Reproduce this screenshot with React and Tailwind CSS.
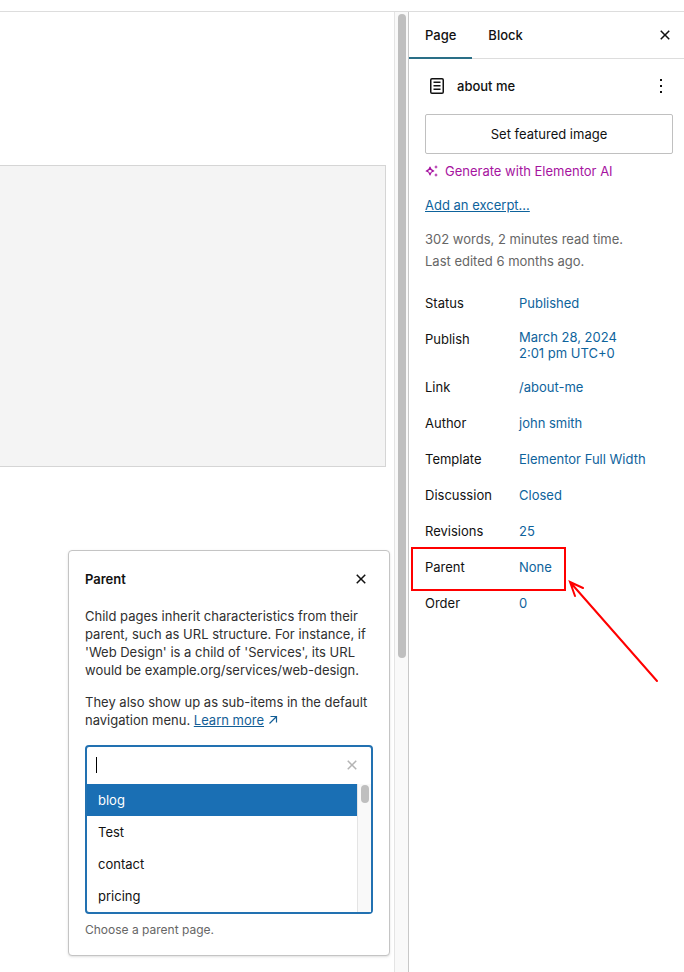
import React, { useState } from 'react';

const pageDetails = [
  { label: 'Status', value: ['Published'] },
  { label: 'Publish', value: ['March 28, 2024', '2:01 pm UTC+0'] },
  { label: 'Link', value: ['/about-me'] },
  { label: 'Author', value: ['john smith'] },
  { label: 'Template', value: ['Elementor Full Width'] },
  { label: 'Discussion', value: ['Closed'] },
  { label: 'Revisions', value: ['25'] },
  { label: 'Parent', value: ['None'], highlighted: true },
  { label: 'Order', value: ['0'] },
];

const parentPages = ['blog', 'Test', 'contact', 'pricing'];

const CloseIcon = () => (
  <svg viewBox="0 0 24 24" className="size-6" fill="currentColor" aria-hidden="true">
    <path d="M12 13.06l3.712 3.713 1.061-1.06L13.061 12l3.712-3.712-1.06-1.06L12 10.938 8.288 7.227l-1.061 1.06L10.939 12l-3.712 3.712 1.06 1.061L12 13.061z" />
  </svg>
);

const PageIcon = () => (
  <svg viewBox="0 0 24 24" className="size-6" fill="currentColor" aria-hidden="true">
    <path d="M15.5 7.5h-7V9h7V7.5Zm-7 3.5h7v1.5h-7V11Zm7 3.5h-7V16h7v-1.5Z" />
    <path
      fillRule="evenodd"
      d="M17 4H7a2 2 0 0 0-2 2v12a2 2 0 0 0 2 2h10a2 2 0 0 0 2-2V6a2 2 0 0 0-2-2ZM7 5.5h10a.5.5 0 0 1 .5.5v12a.5.5 0 0 1-.5.5H7a.5.5 0 0 1-.5-.5V6a.5.5 0 0 1 .5-.5Z"
    />
  </svg>
);

const MoreIcon = () => (
  <svg viewBox="0 0 24 24" className="size-6" fill="currentColor" aria-hidden="true">
    <path d="M13 19h-2v-2h2v2zm0-6h-2v-2h2v2zm0-6h-2V5h2v2z" />
  </svg>
);

const SparkleIcon = () => (
  <svg viewBox="0 0 14 14" className="size-3.5" fill="none" stroke="currentColor" aria-hidden="true">
    <path d="M5 3.2C5.4 5.6 6.4 6.6 8.8 7C6.4 7.4 5.4 8.4 5 10.8C4.6 8.4 3.6 7.4 1.2 7C3.6 6.6 4.6 5.6 5 3.2Z" strokeWidth="1.2" strokeLinejoin="round" />
    <path d="M11 1L11.6 2.4L13 3L11.6 3.6L11 5L10.4 3.6L9 3L10.4 2.4Z" fill="currentColor" stroke="none" />
    <path d="M11 9L11.6 10.4L13 11L11.6 11.6L11 13L10.4 11.6L9 11L10.4 10.4Z" fill="currentColor" stroke="none" />
  </svg>
);

const ExternalIcon = () => (
  <svg viewBox="0 0 10 10" className="ml-1 inline-block size-2.5 align-baseline" fill="none" stroke="currentColor" strokeWidth="1.2" aria-hidden="true">
    <path d="M1.500 8.500L8 2M2.500 1.500H8.500V7.500" />
  </svg>
);

const ParentPopover = () => {
  const [search, setSearch] = useState('');
  const [active, setActive] = useState('blog');

  return (
    <section className="mr-1 w-[322px] max-w-full rounded-sm border border-[#c4c4c4] bg-white px-4 pb-[17px] shadow-sm">
      <div className="flex h-14 items-center justify-between">
        <h2 className="font-semibold">Parent</h2>
        <button type="button" aria-label="Close">
          <CloseIcon />
        </button>
      </div>

      <div className="space-y-3.5 leading-[18px] text-[#2f2f2f]">
        <p>
          Child pages inherit characteristics from their parent, such as URL structure. For instance, if 'Web
          Design' is a child of 'Services', its URL would be example.org/services/web-design.
        </p>
        <p>
          They also show up as sub-items in the default navigation menu.{' '}
          <a href="#learn-more" className="text-[#135e96] underline">
            Learn more
            <ExternalIcon />
          </a>
        </p>
      </div>

      <div className="mt-4 rounded-sm border-2 border-[#2271b1]">
        <div className="flex h-[37px] items-center pr-[7px] pb-px pl-[9px]">
          <span className="h-4 w-px bg-black" />
          <input
            id="parent-search"
            type="text"
            value={search}
            onChange={(e) => setSearch(e.target.value)}
            className="min-w-0 flex-1 outline-none"
          />
          <button type="button" aria-label="Reset" className="text-[#b4b4b4]" onClick={() => setSearch('')}>
            <CloseIcon />
          </button>
        </div>
        <div className="flex">
          <ul role="listbox" aria-label="Parent pages" className="flex-1">
            {parentPages.map((page) => (
              <li
                key={page}
                role="option"
                aria-selected={page === active}
                onMouseEnter={() => setActive(page)}
                className={`flex h-8 items-center px-[11px] ${page === active ? 'bg-[#1a6fb4] text-white' : ''}`}
              >
                {page}
              </li>
            ))}
          </ul>
          <div className="w-3.5 border-l border-[#e4e4e4] bg-[#f9f9f9] px-[3px] pt-px">
            <div className="h-[18px] w-2 rounded-full bg-[#bfbfbf]" />
          </div>
        </div>
      </div>
      <label htmlFor="parent-search" className="mt-2 block text-xs leading-4 text-[#666]">
        Choose a parent page.
      </label>
    </section>
  );
};

const DetailRow = ({ label, value, highlighted }) => (
  <div className="relative flex">
    <dt className="flex h-8 w-[94px] items-center">{label}</dt>
    <dd className="flex min-h-8 items-center">
      <button type="button" className="py-1.5 text-left leading-4 text-[#0e639c]">
        {value.map((line) => (
          <span key={line} className="block">{line}</span>
        ))}
      </button>
    </dd>
    {highlighted && (
      <>
        <div className="pointer-events-none absolute -top-1 -left-3.5 h-11 w-[155px] border-2 border-[#f00]" />
        <svg
          viewBox="0 0 92 104"
          className="pointer-events-none absolute top-7 left-[143px] h-[104px] w-[92px]"
          fill="none"
          stroke="#f00"
          strokeWidth="2"
          aria-hidden="true"
        >
          <path d="M89 102L2 3M15 9L2 3L7 17" strokeLinecap="round" />
        </svg>
      </>
    )}
  </div>
);

const Sidebar = () => {
  const [tab, setTab] = useState('Page');

  return (
    <aside className="w-[276px] shrink-0 border-l border-[#c8c8c8] bg-white">
      <div className="flex h-[47px] items-stretch border-b border-[#ddd] pr-[7px]">
        {['Page', 'Block'].map((name) => (
          <button
            key={name}
            type="button"
            onClick={() => setTab(name)}
            className={`-mb-px border-b-2 px-4 font-medium ${tab === name ? 'border-[#2a6f87]' : 'border-transparent'}`}
          >
            {name}
          </button>
        ))}
        <button type="button" aria-label="Close settings" className="ml-auto">
          <CloseIcon />
        </button>
      </div>

      <div className="pt-[15px] pr-[11px] pl-4">
        <div className="flex items-center gap-2">
          <PageIcon />
          <h2 className="flex-1 font-medium">about me</h2>
          <button type="button" aria-label="Actions">
            <MoreIcon />
          </button>
        </div>

        <button type="button" className="mt-4 h-10 w-full rounded-xs border border-[#c0c0c0]">
          Set featured image
        </button>
        <button type="button" className="mt-[7px] flex items-center gap-1.5 text-[#a613a0]">
          <SparkleIcon />
          Generate with Elementor AI
        </button>
        <a href="#excerpt" className="mt-3.5 block text-[#0e639c] underline">
          Add an excerpt...
        </a>

        <div className="mt-[13px] leading-[22px] text-[#666]">
          <p>302 words, 2 minutes read time.</p>
          <p>Last edited 6 months ago.</p>
        </div>

        <dl className="mt-[15px] space-y-1">
          {pageDetails.map((item) => (
            <DetailRow key={item.label} {...item} />
          ))}
        </dl>
      </div>
    </aside>
  );
};

const App = () => {
  return (
    <div className="flex min-h-screen flex-col bg-white pt-[11px] font-['Inter',sans-serif] text-[13px] leading-5 text-[#111]">
      <div className="flex flex-1 border-t border-[#ddd]">
        <main className="flex min-w-0 flex-1 flex-col items-end pt-[153px] pb-4">
          <div className="mb-[83px] w-full pr-2">
            <div className="h-[302px] border-y border-r border-[#d5d5d5] bg-[#f4f4f4]" />
          </div>
          <ParentPopover />
        </main>
        <div className="w-3.5 shrink-0 border-l border-[#e4e4e4] bg-[#f9f9f9] px-[3px] pt-0.5">
          <div className="h-[644px] w-2 rounded-full bg-[#bfbfbf]" />
        </div>
        <Sidebar />
      </div>
    </div>
  );
};

export default App;
